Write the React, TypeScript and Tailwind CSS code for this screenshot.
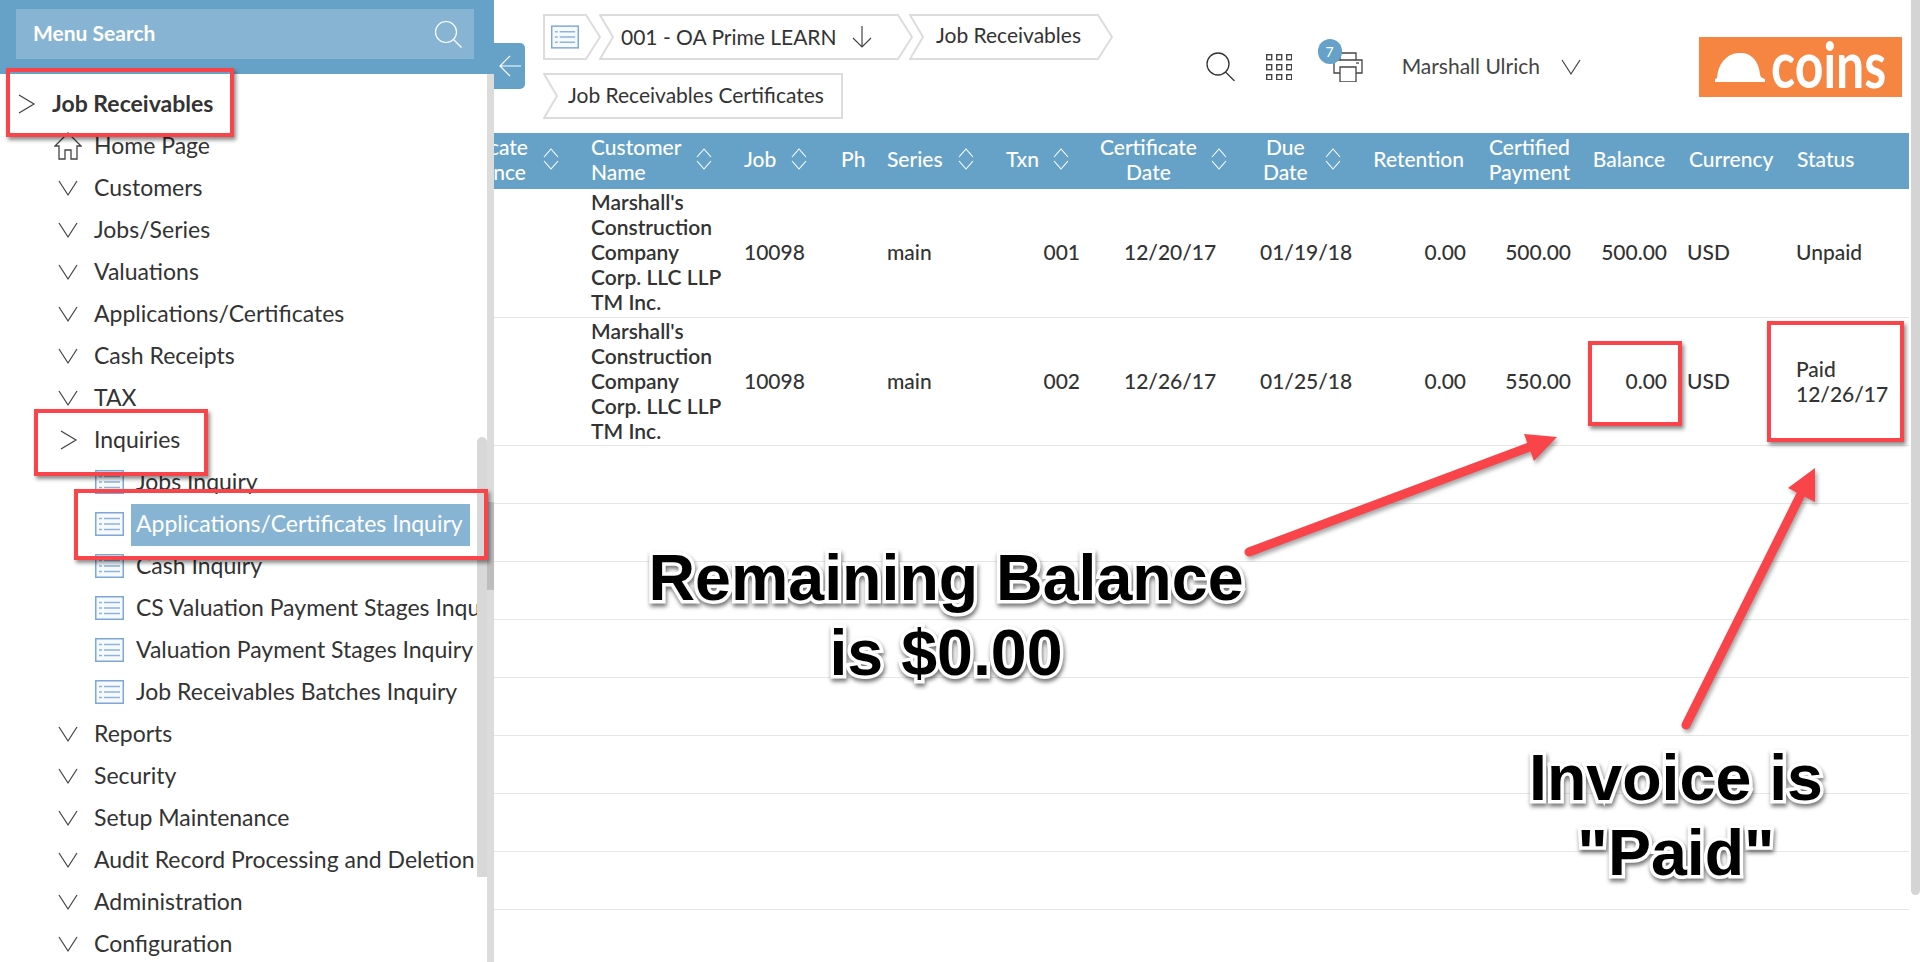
import { ReactNode } from 'react';

const GRID =
  'grid grid-cols-[89px_153px_97px_45px_124px_90px_153px_115px_115px_105px_95px_110px_124px]';

type Item = { label: string; icon: 'down' | 'right' | 'home' | 'list'; selected?: boolean; bold?: boolean };

const menu: Item[] = [
  { label: 'Job Receivables', icon: 'right', bold: true },
  { label: 'Home Page', icon: 'home' },
  { label: 'Customers', icon: 'down' },
  { label: 'Jobs/Series', icon: 'down' },
  { label: 'Valuations', icon: 'down' },
  { label: 'Applications/Certificates', icon: 'down' },
  { label: 'Cash Receipts', icon: 'down' },
  { label: 'TAX', icon: 'down' },
  { label: 'Inquiries', icon: 'right' },
  { label: 'Jobs Inquiry', icon: 'list' },
  { label: 'Applications/Certificates Inquiry', icon: 'list', selected: true },
  { label: 'Cash Inquiry', icon: 'list' },
  { label: 'CS Valuation Payment Stages Inquiry', icon: 'list' },
  { label: 'Valuation Payment Stages Inquiry', icon: 'list' },
  { label: 'Job Receivables Batches Inquiry', icon: 'list' },
  { label: 'Reports', icon: 'down' },
  { label: 'Security', icon: 'down' },
  { label: 'Setup Maintenance', icon: 'down' },
  { label: 'Audit Record Processing and Deletion', icon: 'down' },
  { label: 'Administration', icon: 'down' },
  { label: 'Configuration', icon: 'down' },
];

function ListIcon({ className }: { className?: string }) {
  return (
    <svg className={className} viewBox="0 0 29 24" fill="none">
      <rect x="0.75" y="0.75" width="27.5" height="22.5" fill="#f7fafd" stroke="#7ea6d8" strokeWidth="1.5" />
      <path d="M4 6.5h3M9 6.5h16M4 12h3M9 12h16M4 17.500h3M9 17.500h16" stroke="#8fb3e0" strokeWidth="1.5" />
    </svg>
  );
}

function Chevron({ dir, className }: { dir: 'down' | 'right'; className?: string }) {
  return (
    <svg className={className} viewBox="0 0 20 20" fill="none" stroke="#3f3f3f" strokeWidth="1.2">
      {dir === 'down' ? <path d="M1 3l9 14 9-14" /> : <path d="M3 1l15 9-15 9" />}
    </svg>
  );
}

function HomeIcon() {
  return (
    <svg className="w-[28px] h-[28px] ml-[54px] mr-[12px] shrink-0" viewBox="0 0 28 28" fill="none" stroke="#444" strokeWidth="1.3">
      <path d="M1 14L14 1l13 13h-4v13h-6v-9h-6v9H5V14z" />
    </svg>
  );
}

function MenuRow({ item }: { item: Item }) {
  let icon: ReactNode = null;
  if (item.icon === 'home') icon = <HomeIcon />;
  if (item.icon === 'down') icon = <Chevron dir="down" className="w-[20px] h-[20px] ml-[58px] mr-[16px] shrink-0" />;
  if (item.icon === 'right' && item.bold) icon = <Chevron dir="right" className="w-[20px] h-[20px] ml-[16px] mr-[16px] shrink-0" />;
  if (item.icon === 'right' && !item.bold) icon = <Chevron dir="right" className="w-[20px] h-[20px] ml-[58px] mr-[16px] shrink-0" />;
  if (item.icon === 'list') icon = <ListIcon className="w-[29px] h-[24px] ml-[95px] mr-[7px] shrink-0" />;

  return (
    <div className="flex items-center h-[42px] whitespace-nowrap">
      {icon}
      <span
        className={
          item.selected
            ? 'bg-[#87b4d3] text-white h-[42px] w-[339px] pl-[5px] leading-[38px] shrink-0 relative top-[1px]'
            : item.bold
              ? 'font-bold text-[#333] -mt-[2px]'
              : item.icon === 'list'
                ? 'pl-[5px] text-[#333] -mt-[2px]'
                : 'text-[#333] -mt-[2px]'
        }
      >
        {item.label}
      </span>
    </div>
  );
}

function Sidebar() {
  return (
    <aside className="relative w-[494px] h-full shrink-0 flex flex-col bg-white">
      <div className="h-[74px] bg-[#66a2c8] pt-[9px] pl-[16px] pr-[20px] shrink-0">
        <div className="h-[50px] bg-[#87b4d3] flex items-center justify-between pl-[17px] pr-[12px]">
          <span className="text-white font-bold text-[21px] -mt-[2px]">Menu Search</span>
          <svg className="w-[28px] h-[28px]" viewBox="0 0 28 28" fill="none" stroke="#fff" strokeWidth="1.2">
            <circle cx="12" cy="12" r="10.500" />
            <path d="M19.500 19.500l8 8" />
          </svg>
        </div>
      </div>
      <div className="flex flex-1 min-h-0">
        <nav className="w-[477px] pt-[9px] overflow-hidden text-[23px] leading-[28px]">
          {menu.map(item => (
            <MenuRow key={item.label} item={item} />
          ))}
        </nav>
        <div className="w-[10px]" />
        <div className="w-[7px] bg-[#dcdcdc]" />
      </div>
      {/* scrollbars */}
      <div className="absolute left-[477px] top-[437px] w-[10px] h-[440px] rounded-t-[5px] bg-[#d8d8d8]" />
      <div className="absolute left-[487px] top-[502px] w-[7px] h-[88px] bg-[#bdbdbd]" />
    </aside>
  );
}

function Crumb({
  width,
  first,
  flat,
  children,
  className,
}: {
  width: number;
  first?: boolean;
  flat?: boolean;
  children: ReactNode;
  className?: string;
}) {
  const h = 44;
  const w = width - 2;
  const left = first ? `M1 1V${h + 1}` : `M1 1L14 ${h / 2 + 1}L1 ${h + 1}`;
  const d = flat
    ? `${left}H${w + 1}V1Z`
    : `${left}H${w - 13}L${w + 1} ${h / 2 + 1}L${w - 13} 1Z`;
  return (
    <div className={'relative h-[46px] flex items-center shrink-0 ' + (className ?? '')} style={{ width }}>
      <svg className="absolute inset-0" width={width} height="46" fill="none">
        <path d={d} stroke="#dcdcdc" strokeWidth="2" />
      </svg>
      <div className="relative flex items-center whitespace-nowrap">{children}</div>
    </div>
  );
}

function TopBar() {
  return (
    <header className="h-[133px] flex shrink-0 text-[#333] relative">
      <div className="pl-[49px] pt-[14px] flex flex-col gap-[14px] text-[21px]">
        <div className="flex">
          <Crumb width={58} first>
            <ListIcon className="w-[28px] h-[24px] ml-[8px]" />
          </Crumb>
          <Crumb width={314} className="-ml-[2px]">
            <span className="pl-[22px]">001 - OA Prime LEARN</span>
            <svg className="w-[20px] h-[24px] ml-[15px]" viewBox="0 0 20 24" fill="none" stroke="#444" strokeWidth="1.2">
              <path d="M10 1v21M1 13l9 9 9-9" />
            </svg>
          </Crumb>
          <Crumb width={204} className="-ml-[4px]">
            <span className="pl-[27px] -mt-[4px]">Job Receivables</span>
          </Crumb>
        </div>
        <Crumb width={300} flat className="-mt-[1px]">
          <span className="pl-[25px] -mt-[3px]">Job Receivables Certificates</span>
        </Crumb>
      </div>
      <div className="ml-auto flex items-start">
        <svg className="mt-[52px] w-[29px] h-[29px]" viewBox="0 0 29 29" fill="none" stroke="#333" strokeWidth="1.3">
          <circle cx="12" cy="12" r="11" />
          <path d="M19.500 20l9 9" />
        </svg>
        <svg className="mt-[54px] ml-[31px] w-[26px] h-[26px]" viewBox="0 0 26 26" fill="none" stroke="#444" strokeWidth="1.4">
          {[0, 10, 20].flatMap(y =>
            [0, 10, 20].map(x => <rect key={`${x}-${y}`} x={x + 0.7} y={y + 0.7} width="5" height="5" />)
          )}
        </svg>
        <div className="relative ml-[41px] mt-[52px] w-[30px] h-[30px]">
          <svg className="w-[30px] h-[30px]" viewBox="0 0 30 30" fill="none" stroke="#444" strokeWidth="1.3">
            <path d="M7 8V1h16v7M7 21H1V8h28v13h-6" />
            <path d="M7 15h16v15H7z" fill="#fff" />
            <path d="M23 11h3" />
          </svg>
          <div className="absolute -left-[15px] -top-[13px] w-[24px] h-[25px] rounded-full bg-[#66a2c8] text-white text-[14px] flex items-center justify-center">
            7
          </div>
        </div>
        <span className="ml-[39px] mt-[51px] text-[21px] leading-[30px] text-[#444]">Marshall Ulrich</span>
        <Chevron dir="down" className="ml-[21px] mt-[57px] w-[20px] h-[20px]" />
        <div className="ml-[118px] mr-[18px] mt-[37px] w-[203px] h-[60px] bg-[#f58540] flex items-center pl-[16px]">
          <svg className="w-[51px] h-[29px] shrink-0" viewBox="0 0 51 29" fill="#fff">
            <path d="M2 25C3 11 11 1 23 0c3-.3 6 0 9 1 8 3 12 11 13 20 .3 2 1 4 5 5v3H0v-3c1-.3 2-.6 2-1z" />
          </svg>
          <span className="ml-[5px] text-white font-bold text-[50px] leading-[60px] -mt-[6px] scale-y-[1.28]">coins</span>
        </div>
      </div>
    </header>
  );
}

function Sort() {
  return (
    <svg className="w-[16px] h-[22px] shrink-0" viewBox="0 0 16 22" fill="none" stroke="#fff" strokeWidth="1.1">
      <path d="M1 9l7-8 7 8M1 13l7 8 7-8" />
    </svg>
  );
}

function TableHeader() {
  return (
    <div className={GRID + ' h-[56px] pb-[5px] bg-[#66a2c8] text-white text-[21px] leading-[25px] font-medium shrink-0'}>
      <div className="flex items-center justify-end gap-[15px] pr-[24px] overflow-hidden whitespace-nowrap">
        <span className="text-center shrink-0">Certificate<br />Reference</span>
        <Sort />
      </div>
      <div className="flex items-center gap-[15px] pl-[8px]"><span>Customer<br />Name</span><Sort /></div>
      <div className="flex items-center gap-[15px] pl-[8px]"><span>Job</span><Sort /></div>
      <div className="flex items-center pl-[8px]"><span>Ph</span></div>
      <div className="flex items-center gap-[15px] pl-[9px]"><span>Series</span><Sort /></div>
      <div className="flex items-center gap-[14px] pl-[4px]"><span>Txn</span><Sort /></div>
      <div className="flex items-center gap-[14px] pl-[8px]"><span className="text-center">Certificate<br />Date</span><Sort /></div>
      <div className="flex items-center gap-[17px] pl-[18px]"><span className="text-center">Due<br />Date</span><Sort /></div>
      <div className="flex items-center justify-end pr-[11px]"><span>Retention</span></div>
      <div className="flex items-center justify-end pr-[10px]"><span className="text-center">Certified<br />Payment</span></div>
      <div className="flex items-center justify-end pr-[10px]"><span>Balance</span></div>
      <div className="flex items-center pl-[14px]"><span>Currency</span></div>
      <div className="flex items-center pl-[12px]"><span>Status</span></div>
    </div>
  );
}

function DataRow({
  height,
  txn,
  cert,
  due,
  payment,
  balance,
  status,
}: {
  height: string;
  txn: string;
  cert: string;
  due: string;
  payment: string;
  balance: string;
  status: ReactNode;
}) {
  const cell = 'flex items-center';
  return (
    <div className={GRID + ' ' + height + ' pb-[4px] border-b border-[#e6e6e6] text-[21px] leading-[25px] text-[#333] font-medium'}>
      <div />
      <div className={cell + ' pl-[8px] font-semibold whitespace-nowrap'}>
        <span>Marshall's<br />Construction<br />Company<br />Corp. LLC LLP<br />TM Inc.</span>
      </div>
      <div className={cell + ' pl-[8px]'}>10098</div>
      <div />
      <div className={cell + ' pl-[9px]'}>main</div>
      <div className={cell + ' justify-end pr-[12px]'}>{txn}</div>
      <div className={cell + ' pl-[32px]'}>{cert}</div>
      <div className={cell + ' pl-[15px]'}>{due}</div>
      <div className={cell + ' justify-end pr-[9px]'}>0.00</div>
      <div className={cell + ' justify-end pr-[9px]'}>{payment}</div>
      <div className={cell + ' justify-end pr-[8px]'}>{balance}</div>
      <div className={cell + ' pl-[12px]'}>USD</div>
      <div className={cell + ' pl-[11px]'}>{status}</div>
    </div>
  );
}

function Callouts() {
  const boxes = [
    'left-[6px] top-[68px] w-[228px] h-[69px]',
    'left-[34px] top-[409px] w-[174px] h-[67px]',
    'left-[74px] top-[489px] w-[414px] h-[71px]',
    'left-[1588px] top-[341px] w-[94px] h-[85px]',
    'left-[1767px] top-[321px] w-[137px] h-[121px]',
  ];
  const label =
    "absolute text-center whitespace-nowrap font-['Liberation_Sans',Arial,sans-serif] font-bold text-[64.5px] leading-[75px] text-black [-webkit-text-stroke:7px_white] [paint-order:stroke_fill] drop-shadow-[1px_3px_2px_rgba(0,0,0,0.55)]";
  return (
    <>
      {boxes.map(b => (
        <div key={b} className={'absolute border-[4px] border-[#f9444a] shadow-[2px_3px_4px_rgba(0,0,0,0.45)] ' + b} />
      ))}
      <svg className="absolute inset-0 pointer-events-none drop-shadow-[2px_3px_2px_rgba(0,0,0,0.35)]" width="1920" height="962" fill="#f9444a">
        <path d="M1249 552L1532 446" stroke="#f9444a" strokeWidth="9" strokeLinecap="round" />
        <path d="M1557 437L1524 434L1534 461Z" />
        <path d="M1686 725L1803 490" stroke="#f9444a" strokeWidth="9" strokeLinecap="round" />
        <path d="M1815 468L1788 488L1815 502Z" />
      </svg>
      <div className={label + ' left-[646px] top-[541px] w-[600px]'}>Remaining Balance<br />is $0.00</div>
      <div className={label + ' left-[1476px] top-[741px] w-[400px]'}>Invoice is<br />"Paid"</div>
    </>
  );
}

export default function App() {
  return (
    <div className="relative flex h-[962px] overflow-hidden bg-white font-['Lato','Noto_Sans',sans-serif]">
      <Sidebar />
      <main className="flex-1 min-w-0 flex flex-col">
        <TopBar />
        <div className="w-[1415px]">
          <TableHeader />
          <DataRow height="h-[129px]" txn="001" cert="12/20/17" due="01/19/18" payment="500.00" balance="500.00" status="Unpaid" />
          <DataRow
            height="h-[128px]"
            txn="002"
            cert="12/26/17"
            due="01/25/18"
            payment="550.00"
            balance="0.00"
            status={<span>Paid<br />12/26/17</span>}
          />
          {Array.from({ length: 8 }).map((_, i) => (
            <div key={i} className="h-[58px] border-b border-[#e6e6e6]" />
          ))}
        </div>
      </main>
      {/* back tab and page scrollbar */}
      <button className="absolute left-[494px] top-[43px] w-[31px] h-[46px] rounded-r-[5px] bg-[#66a2c8] flex items-center justify-center">
        <svg className="w-[22px] h-[22px]" viewBox="0 0 22 22" fill="none" stroke="#fff" strokeWidth="1.2">
          <path d="M22 11H1M11 1L1 11l10 10" />
        </svg>
      </button>
      <div className="absolute right-0 top-0 w-[9px] h-[895px] rounded-b-[5px] bg-[#d4d4d4]" />
      <Callouts />
    </div>
  );
}
